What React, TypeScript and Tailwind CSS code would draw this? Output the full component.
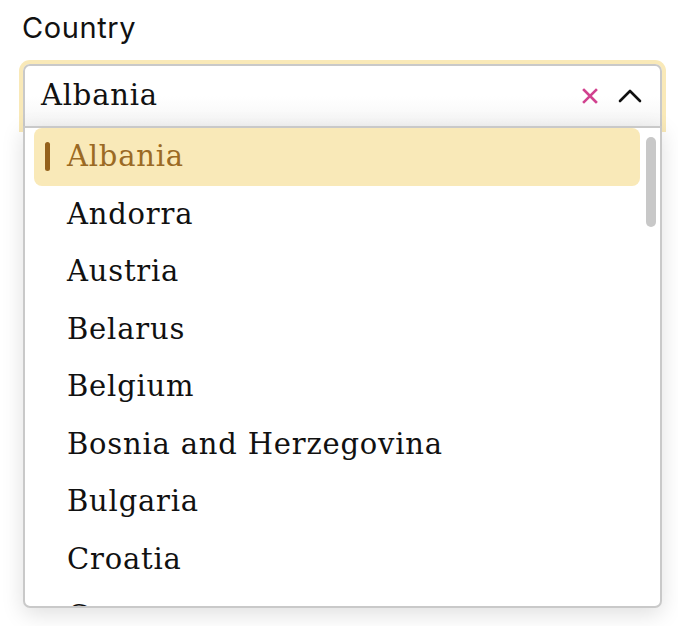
import React from 'react';

const countries = [
    'Albania',
    'Andorra',
    'Austria',
    'Belarus',
    'Belgium',
    'Bosnia and Herzegovina',
    'Bulgaria',
    'Croatia',
    'Cyprus',
];

export default function App() {
    const selected = 'Albania';

    return (
        <div className="min-h-screen bg-white pl-[22px] pr-[16px] pt-[8px] font-['Inter',sans-serif]">
            <label className="block text-[29px] leading-[40px] tracking-[0.6px] text-[#111]">Country</label>

            <div className="relative mt-[16px] ml-[1px] w-[639px]">
                {/* input */}
                <div className="flex h-[64px] items-center rounded-t-[7px] border-2 border-[#c9c9c9] bg-gradient-to-b from-white via-white to-[#f5f5f5] pl-[16px] pr-[18px] ring-4 ring-[#f9e9b8]">
                    <span className="flex-1 font-['DejaVu_Serif',serif] text-[29px] tracking-[0.8px] text-[#111]">{selected}</span>
                    <button className="mr-[20px] text-[#d1428f]">
                        <svg width="16" height="16" viewBox="0 0 16 16" fill="none" stroke="currentColor" strokeWidth="2.6" strokeLinecap="square">
                            <path d="M2 2l12 12M14 2L2 14" />
                        </svg>
                    </button>
                    <button className="text-[#111]">
                        <svg width="24" height="14" viewBox="0 0 24 14" fill="none" stroke="currentColor" strokeWidth="2.6" strokeLinecap="round" strokeLinejoin="round">
                            <path d="M2 12L12 2l10 10" />
                        </svg>
                    </button>
                </div>

                {/* dropdown */}
                <div className="absolute left-0 right-0 top-[62px] z-10 h-[482px] overflow-hidden rounded-b-[7px] border-2 border-[#c9c9c9] bg-white shadow-[0_6px_22px_rgba(0,0,0,0.13)]">
                    <ul className="pl-[9px] pr-[20px]">
                        {countries.map((c) => {
                            const active = c === selected;
                            return (
                                <li
                                    key={c}
                                    className={`relative flex h-[57.5px] items-center rounded-[8px] pl-[33px] font-['DejaVu_Serif',serif] text-[29px] tracking-[0.8px] ${active ? 'bg-[#f9e9b8] text-[#9b6a24]' : 'text-[#111]'}`}
                                >
                                    {active && (
                                        <span className="absolute left-[11px] top-[14px] h-[29px] w-[5px] rounded-full bg-[#94611c]" />
                                    )}
                                    {c}
                                </li>
                            );
                        })}
                    </ul>
                    <div className="absolute right-[4px] top-[9px] h-[90px] w-[10px] rounded-full bg-[#c8c8c8]" />
                </div>
            </div>
        </div>
    );
}
